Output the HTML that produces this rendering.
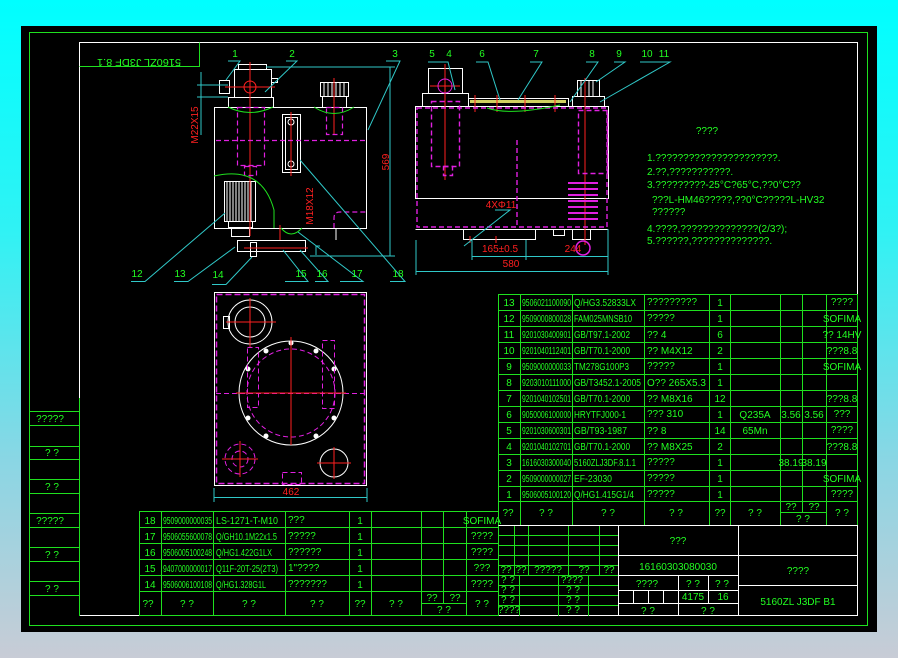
<!DOCTYPE html>
<html><head><meta charset="utf-8"><style>
html,body{margin:0;padding:0;width:898px;height:658px;overflow:hidden}
svg{display:block}
text{font-family:"Liberation Sans Narrow","Liberation Sans","Noto Sans CJK SC",sans-serif;fill:#22ff22;font-size:10px}
.r{fill:#ff2020}
</style></head><body>
<svg width="898" height="658" viewBox="0 0 898 658" xmlns="http://www.w3.org/2000/svg">
<defs><linearGradient id="bg" x1="0" y1="0" x2="0" y2="1">
<stop offset="0" stop-color="#00ffff"/><stop offset="0.35" stop-color="#30f2f4"/><stop offset="0.7" stop-color="#8ad6e4"/><stop offset="1" stop-color="#c8ccd6"/></linearGradient></defs>
<rect width="898" height="658" fill="url(#bg)"/>
<rect x="21" y="26" width="856" height="606" fill="#000"/>
<g fill="none" stroke="#1fe01f" stroke-width="1">
<rect x="29.5" y="32.5" width="838" height="593"/>
</g>
<rect x="79.5" y="42.5" width="778" height="573" fill="none" stroke="#fff"/>
<!-- upside-down title -->
<g fill="none" stroke="#1fe01f"><path d="M79.5 66.5H199.5V42.5"/></g>
<text x="139" y="49" transform="rotate(180 139 54)" text-anchor="middle" font-size="14" textLength="84" lengthAdjust="spacingAndGlyphs">5160ZL J3DF 8.1</text>

<!-- left column -->
<g stroke="#1fe01f" fill="none">
<path d="M79.5 398V616M29.5 411.5H79.5M29.5 425.5H79.5M29.5 446.5H79.5M29.5 459.5H79.5M29.5 479.5H79.5M29.5 493.5H79.5M29.5 513.5H79.5M29.5 527.5H79.5M29.5 547.5H79.5M29.5 561.5H79.5M29.5 581.5H79.5M29.5 595.5H79.5"/>
</g>
<g text-anchor="middle">
<text x="50" y="422">?????</text><text x="52" y="456">?  ?</text><text x="52" y="490">?  ?</text>
<text x="50" y="524">?????</text><text x="52" y="558">?  ?</text><text x="52" y="592">?  ?</text>
</g>

<!-- FRONT VIEW -->
<g fill="none" stroke="#fff">
<rect x="214.5" y="107.5" width="152" height="121"/>
<rect x="234.5" y="69.5" width="37" height="28"/>
<rect x="238.5" y="64.5" width="28" height="5"/>
<rect x="228.5" y="97.5" width="45" height="10"/>
<rect x="219.5" y="80.5" width="10" height="13"/>
<rect x="271.5" y="78.5" width="6" height="4"/>
<rect x="320.5" y="82.5" width="28" height="14"/>
<path d="M324 83V96M328 83V96M332 83V96M336 83V96M340 83V96M344 83V96"/>
<rect x="322.5" y="96.5" width="24" height="11"/>
<rect x="282.5" y="114.5" width="18" height="58"/>
<rect x="285.5" y="117.5" width="12" height="52"/>
<circle cx="291" cy="122" r="3"/><circle cx="291" cy="164" r="3"/>
<rect x="224.5" y="181.5" width="31" height="40"/>
<path d="M227 182V221M230 182V221M233 182V221M236 182V221M239 182V221M242 182V221M245 182V221M248 182V221M251 182V221"/>
<rect x="228.5" y="221.5" width="24" height="6"/>
<rect x="231.5" y="228.5" width="18" height="8"/>
<rect x="237.5" y="240.5" width="68" height="11"/>
<rect x="250.5" y="242.5" width="6" height="14"/>
<path d="M336 228V240"/>
</g>
<g fill="none" stroke="#ff2020">
<path d="M250 62V236M225 87H275M334 78V135M291 112V176M244 248H308M280 225V240"/>
<circle cx="250" cy="87" r="6"/>
</g>
<g fill="none" stroke="#e020e0" stroke-dasharray="5,3" stroke-width="1.2">
<path d="M216 140.5H366"/>
<rect x="237.5" y="107.5" width="27" height="58"/>
<rect x="244.5" y="166.5" width="12" height="9"/>
<rect x="326.5" y="107.5" width="16" height="27"/>
<path d="M334 228V218Q334 212 340 212H366"/>
</g>
<g fill="none" stroke="#1fe01f">
<path d="M228 107Q250 118 273 107M314 107Q334 120 354 107M214 176Q262 165 274 210V228M281 228Q291 240 302 228"/>
</g>
<g fill="none" stroke="#30c8c8">
<path d="M201 72V135M197 85H228M197 97H228M390 67V256M266 67H395M310 256H395M316 246H320M316 246V255"/>
<path d="M228 61H240L226 80M286 61H297L265 92M386 61H400L368 130"/>
<path d="M131 281.5H145L225 213M174 281.5H188L235 247M212 284.5H226L252 257M285 281.5H308L283 250M315 281.5H328L300 250M340 281.5H363L298 232M390 281.5H405L300 160"/>
</g>
<text class="r" x="198" y="125" transform="rotate(-90 198 125)" font-size="8" text-anchor="middle">M22X15</text>
<text class="r" x="389" y="162" transform="rotate(-90 389 162)" font-size="8" text-anchor="middle">569</text>
<text class="r" x="313" y="206" transform="rotate(-90 313 206)" font-size="8" text-anchor="middle">M18X12</text>
<g text-anchor="middle">
<text x="235" y="57">1</text><text x="292" y="57">2</text><text x="395" y="57">3</text>
<text x="137" y="277">12</text><text x="180" y="277">13</text><text x="218" y="278">14</text>
<text x="301" y="277">15</text><text x="322" y="277">16</text><text x="357" y="277">17</text><text x="398" y="277">18</text>
<text x="432" y="57">5</text><text x="449" y="57">4</text><text x="482" y="57">6</text><text x="536" y="57">7</text>
<text x="592" y="57">8</text><text x="619" y="57">9</text><text x="647" y="57">10</text><text x="664" y="57">11</text>
</g>

<!-- SIDE VIEW -->
<g fill="none" stroke="#fff">
<rect x="415.5" y="106.5" width="193" height="92"/>
<path d="M415.5 229.5H608.5"/>
<rect x="428.5" y="68.5" width="34" height="25"/>
<rect x="422.5" y="93.5" width="46" height="13"/>
<rect x="468.5" y="98.5" width="100" height="8"/>
<rect x="577.5" y="80.5" width="22" height="16"/>
<path d="M581 81V96M585 81V96M589 81V96M593 81V96"/>
<rect x="572.5" y="96.5" width="32" height="10"/>
<rect x="463.5" y="229.5" width="72" height="10"/>
<rect x="553.5" y="229.5" width="11" height="6"/>
<rect x="572.5" y="229.5" width="18" height="10"/>
</g>
<rect x="470" y="100" width="96" height="3" fill="#d0d060"/>
<g fill="none" stroke="#ff2020">
<path d="M445 64V180M430 86H460M585 78V245M475 95V112M497 95V112M525 95V112M555 95V112M470 236V243M496 236V243"/>
<circle cx="445" cy="86" r="7" stroke="#e020e0"/>
</g>
<g fill="none" stroke="#e020e0" stroke-dasharray="5,3" stroke-width="1.4">
<rect x="417" y="108" width="190" height="119"/>
<rect x="431.5" y="101.5" width="28" height="65"/>
<rect x="443.5" y="166.5" width="9" height="9"/>
<path d="M517 140V228"/>
<rect x="578.5" y="110.5" width="29" height="63"/>
</g>
<g stroke="#e020e0" stroke-width="2">
<path d="M568 183H598M568 189H598M568 195H598M568 201H598M568 207H598M568 213H598M568 219H598"/>
</g>
<circle cx="583" cy="248" r="7" fill="none" stroke="#e020e0" stroke-width="1.5"/>
<path d="M487 78Q510 86 560 75" fill="none" stroke="#1fe01f" transform="translate(0,30)"/>
<g fill="none" stroke="#30c8c8">
<path d="M472 256.5H608M416 271.5H608M416 240V275M608 229V275M472 240V260M526 240V260M495 210H510L464 246"/>
<path d="M428 62H448L455 90M476 62H488L500 100M530 62H542L518 100M586 62H598L570 102M614 62H625L596 82M640 62H670L600 102"/>
</g>
<text class="r" x="500" y="252" font-size="8" text-anchor="middle">165±0.5</text>
<text class="r" x="573" y="252" font-size="8" text-anchor="middle">244</text>
<text class="r" x="511" y="267" font-size="8" text-anchor="middle">580</text>
<text class="r" x="501" y="208" font-size="8" text-anchor="middle">4XΦ11</text>

<!-- NOTES -->
<text x="707" y="134" text-anchor="middle" font-size="11">????</text>
<g font-size="9.5">
<text x="647" y="161">1.??????????????????????.</text>
<text x="647" y="175">2.??,???????????.</text>
<text x="647" y="188">3.?????????-25°C?65°C,??0°C??</text>
<text x="652" y="203">???L-HM46?????,??0°C?????L-HV32</text>
<text x="652" y="215">??????</text>
<text x="647" y="232">4.????,??????????????(2/3?);</text>
<text x="647" y="244">5.??????,??????????????.</text>
</g>

<!-- PLAN VIEW -->
<rect x="214.5" y="292.5" width="152" height="193" fill="none" stroke="#fff"/>
<rect x="216.5" y="294.5" width="148" height="189" fill="none" stroke="#e020e0" stroke-dasharray="6,3" stroke-width="1.5"/>
<g fill="none" stroke="#fff">
<circle cx="291" cy="393" r="52"/>
<circle cx="250" cy="322" r="22"/>
<circle cx="250" cy="322" r="15"/>
<rect x="223.5" y="316.5" width="6" height="12"/>
<circle cx="334" cy="463" r="14"/>
</g>
<g fill="#fff"><circle cx="291" cy="343" r="2.5"/><circle cx="316" cy="351" r="2.5"/><circle cx="334" cy="369" r="2.5"/><circle cx="334" cy="418" r="2.5"/><circle cx="316" cy="436" r="2.5"/><circle cx="266" cy="436" r="2.5"/><circle cx="248" cy="418" r="2.5"/><circle cx="248" cy="369" r="2.5"/><circle cx="266" cy="351" r="2.5"/></g>
<g fill="none" stroke="#e020e0" stroke-dasharray="5,3">
<circle cx="291" cy="393" r="44"/>
<rect x="247.5" y="347.5" width="11" height="60"/>
<rect x="322.5" y="340.5" width="12" height="68"/>
<circle cx="240" cy="459" r="15"/>
<circle cx="240" cy="459" r="8"/>
<path d="M216 393.5H366"/>
<rect x="282.5" y="472.5" width="19" height="12"/>
</g>
<g fill="none" stroke="#ff2020">
<path d="M291 337V445M236 393H346M250 298V347M226 322H276M240 441V477M222 459H258M334 447V479M317 463H351"/>
</g>
<path d="M214 497.5H367M214 488V502M367 488V502" fill="none" stroke="#30c8c8"/>
<text class="r" x="291" y="495" font-size="8" text-anchor="middle">462</text>

<!-- LEFT PARTS TABLE -->
<g fill="none" stroke="#1fe01f">
<rect x="139.5" y="511.5" width="359" height="104"/>
<path d="M139.5 527.5H498.5M139.5 543.5H498.5M139.5 559.5H498.5M139.5 575.5H498.5M139.5 591.5H498.5M161.5 511V616M213.5 511V616M285.5 511V616M349.5 511V616M371.5 511V616M421.5 511V616M443.5 511V603M466.5 511V616M421.5 603.5H466.5"/>
</g>
<g>
<text x="150" y="524" text-anchor="middle">18</text><text x="163" y="524" textLength="49" lengthAdjust="spacingAndGlyphs">9509000000035</text><text x="216" y="524" textLength="62" lengthAdjust="spacingAndGlyphs">LS-1271-T-M10</text><text x="288" y="523">???</text><text x="360" y="524" text-anchor="middle">1</text><text x="482" y="524" text-anchor="middle">SOFIMA</text>
<text x="150" y="540" text-anchor="middle">17</text><text x="163" y="540" textLength="49" lengthAdjust="spacingAndGlyphs">9506055600078</text><text x="216" y="540" textLength="61" lengthAdjust="spacingAndGlyphs">Q/GH10.1M22x1.5</text><text x="288" y="539">?????</text><text x="360" y="540" text-anchor="middle">1</text><text x="482" y="539" text-anchor="middle">????</text>
<text x="150" y="556" text-anchor="middle">16</text><text x="163" y="556" textLength="49" lengthAdjust="spacingAndGlyphs">9506005100248</text><text x="216" y="556" textLength="56" lengthAdjust="spacingAndGlyphs">Q/HG1.422G1LX</text><text x="288" y="555">??????</text><text x="360" y="556" text-anchor="middle">1</text><text x="482" y="555" text-anchor="middle">????</text>
<text x="150" y="572" text-anchor="middle">15</text><text x="163" y="572" textLength="49" lengthAdjust="spacingAndGlyphs">9407000000017</text><text x="216" y="572" textLength="62" lengthAdjust="spacingAndGlyphs">Q11F-20T-25(2T3)</text><text x="288" y="571">1"????</text><text x="360" y="572" text-anchor="middle">1</text><text x="482" y="571" text-anchor="middle">???</text>
<text x="150" y="588" text-anchor="middle">14</text><text x="163" y="588" textLength="49" lengthAdjust="spacingAndGlyphs">9506006100108</text><text x="216" y="588" textLength="50" lengthAdjust="spacingAndGlyphs">Q/HG1.328G1L</text><text x="288" y="587">???????</text><text x="360" y="588" text-anchor="middle">1</text><text x="482" y="587" text-anchor="middle">????</text>
<text x="148" y="607" text-anchor="middle">??</text><text x="187" y="607" text-anchor="middle">?   ?</text><text x="249" y="607" text-anchor="middle">?   ?</text><text x="317" y="607" text-anchor="middle">?   ?</text><text x="360" y="607" text-anchor="middle">??</text><text x="396" y="607" text-anchor="middle">?    ?</text><text x="432" y="601" text-anchor="middle">??</text><text x="455" y="601" text-anchor="middle">??</text><text x="444" y="613" text-anchor="middle">?  ?</text><text x="482" y="607" text-anchor="middle">?  ?</text>
</g>

<!-- RIGHT PARTS TABLE -->
<g fill="none" stroke="#1fe01f">
<rect x="498.5" y="294.5" width="359" height="231"/>
<path d="M498.5 310.5H858M498.5 326.5H858M498.5 342.5H858M498.5 358.5H858M498.5 374.5H858M498.5 390.5H858M498.5 406.5H858M498.5 422.5H858M498.5 438.5H858M498.5 454.5H858M498.5 470.5H858M498.5 486.5H858M498.5 501.5H858M520.5 294V525M572.5 294V525M644.5 294V525M709.5 294V525M730.5 294V525M780.5 294V525M802.5 294V513M826.5 294V525M780.5 512.5H826.5"/>
</g>
<g>
<text x="509" y="306" text-anchor="middle">13</text><text x="522" y="306" textLength="49" lengthAdjust="spacingAndGlyphs">9506021100090</text><text x="574" y="306" textLength="62" lengthAdjust="spacingAndGlyphs">Q/HG3.52833LX</text><text x="647" y="305">?????????</text><text x="720" y="306" text-anchor="middle">1</text><text x="842" y="305" text-anchor="middle">????</text>
<text x="509" y="322" text-anchor="middle">12</text><text x="522" y="322" textLength="49" lengthAdjust="spacingAndGlyphs">9509000800028</text><text x="574" y="322" textLength="58" lengthAdjust="spacingAndGlyphs">FAM025MNSB10</text><text x="647" y="321">?????</text><text x="720" y="322" text-anchor="middle">1</text><text x="842" y="322" text-anchor="middle">SOFIMA</text>
<text x="509" y="338" text-anchor="middle">11</text><text x="522" y="338" textLength="49" lengthAdjust="spacingAndGlyphs">9201030400901</text><text x="574" y="338" textLength="56" lengthAdjust="spacingAndGlyphs">GB/T97.1-2002</text><text x="647" y="338">?? 4</text><text x="720" y="338" text-anchor="middle">6</text><text x="842" y="338" text-anchor="middle">?? 14HV</text>
<text x="509" y="354" text-anchor="middle">10</text><text x="522" y="354" textLength="49" lengthAdjust="spacingAndGlyphs">9201040112401</text><text x="574" y="354" textLength="56" lengthAdjust="spacingAndGlyphs">GB/T70.1-2000</text><text x="647" y="354">?? M4X12</text><text x="720" y="354" text-anchor="middle">2</text><text x="842" y="354" text-anchor="middle">???8.8</text>
<text x="509" y="370" text-anchor="middle">9</text><text x="522" y="370" textLength="49" lengthAdjust="spacingAndGlyphs">9509000000033</text><text x="574" y="370" textLength="55" lengthAdjust="spacingAndGlyphs">TM278G100P3</text><text x="647" y="369">?????</text><text x="720" y="370" text-anchor="middle">1</text><text x="842" y="370" text-anchor="middle">SOFIMA</text>
<text x="509" y="386" text-anchor="middle">8</text><text x="522" y="386" textLength="49" lengthAdjust="spacingAndGlyphs">9203010111000</text><text x="574" y="386" textLength="67" lengthAdjust="spacingAndGlyphs">GB/T3452.1-2005</text><text x="647" y="386">O?? 265X5.3</text><text x="720" y="386" text-anchor="middle">1</text>
<text x="509" y="402" text-anchor="middle">7</text><text x="522" y="402" textLength="49" lengthAdjust="spacingAndGlyphs">9201040102501</text><text x="574" y="402" textLength="56" lengthAdjust="spacingAndGlyphs">GB/T70.1-2000</text><text x="647" y="402">?? M8X16</text><text x="720" y="402" text-anchor="middle">12</text><text x="842" y="402" text-anchor="middle">???8.8</text>
<text x="509" y="418" text-anchor="middle">6</text><text x="522" y="418" textLength="49" lengthAdjust="spacingAndGlyphs">9050006100000</text><text x="574" y="418" textLength="52" lengthAdjust="spacingAndGlyphs">HRYTFJ000-1</text><text x="647" y="417">??? 310</text><text x="720" y="418" text-anchor="middle">1</text><text x="755" y="418" text-anchor="middle">Q235A</text><text x="791" y="418" text-anchor="middle">3.56</text><text x="814" y="418" text-anchor="middle">3.56</text><text x="842" y="417" text-anchor="middle">???</text>
<text x="509" y="434" text-anchor="middle">5</text><text x="522" y="434" textLength="49" lengthAdjust="spacingAndGlyphs">9201030600301</text><text x="574" y="434" textLength="53" lengthAdjust="spacingAndGlyphs">GB/T93-1987</text><text x="647" y="434">?? 8</text><text x="720" y="434" text-anchor="middle">14</text><text x="755" y="434" text-anchor="middle">65Mn</text><text x="842" y="433" text-anchor="middle">????</text>
<text x="509" y="450" text-anchor="middle">4</text><text x="522" y="450" textLength="49" lengthAdjust="spacingAndGlyphs">9201040102701</text><text x="574" y="450" textLength="56" lengthAdjust="spacingAndGlyphs">GB/T70.1-2000</text><text x="647" y="450">?? M8X25</text><text x="720" y="450" text-anchor="middle">2</text><text x="842" y="450" text-anchor="middle">???8.8</text>
<text x="509" y="466" text-anchor="middle">3</text><text x="522" y="466" textLength="49" lengthAdjust="spacingAndGlyphs">1616030300040</text><text x="574" y="466" textLength="62" lengthAdjust="spacingAndGlyphs">5160ZLJ3DF.8.1.1</text><text x="647" y="465">?????</text><text x="720" y="466" text-anchor="middle">1</text><text x="791" y="466" text-anchor="middle">38.19</text><text x="814" y="466" text-anchor="middle">38.19</text>
<text x="509" y="482" text-anchor="middle">2</text><text x="522" y="482" textLength="49" lengthAdjust="spacingAndGlyphs">9509000000027</text><text x="574" y="482" textLength="38" lengthAdjust="spacingAndGlyphs">EF-23030</text><text x="647" y="481">?????</text><text x="720" y="482" text-anchor="middle">1</text><text x="842" y="482" text-anchor="middle">SOFIMA</text>
<text x="509" y="498" text-anchor="middle">1</text><text x="522" y="498" textLength="49" lengthAdjust="spacingAndGlyphs">9506005100120</text><text x="574" y="498" textLength="60" lengthAdjust="spacingAndGlyphs">Q/HG1.415G1/4</text><text x="647" y="497">?????</text><text x="720" y="498" text-anchor="middle">1</text><text x="842" y="497" text-anchor="middle">????</text>
<text x="508" y="516" text-anchor="middle">??</text><text x="546" y="516" text-anchor="middle">?   ?</text><text x="608" y="516" text-anchor="middle">?   ?</text><text x="676" y="516" text-anchor="middle">?   ?</text><text x="720" y="516" text-anchor="middle">??</text><text x="755" y="516" text-anchor="middle">?    ?</text><text x="791" y="510" text-anchor="middle">??</text><text x="814" y="510" text-anchor="middle">??</text><text x="803" y="522" text-anchor="middle">?  ?</text><text x="842" y="516" text-anchor="middle">?  ?</text>
</g>

<!-- TITLE BLOCK -->
<g fill="none" stroke="#1fe01f">
<path d="M498.5 535.5H618.5M498.5 545.5H618.5M498.5 555.5H618.5M498.5 565.5H618.5M498.5 575.5H618.5M498.5 585.5H618.5M498.5 595.5H618.5M498.5 605.5H618.5M514.5 525V575M528.5 525V575M568.5 525V575M599.5 525V575M519.5 575V616M558.5 575V616M588.5 575V616"/>
</g>
<g fill="none" stroke="#fff">
<path d="M498.5 525.5H858M618.5 525V616M738.5 525V616M618.5 555.5H858M618.5 575.5H738.5M618.5 590.5H738.5M618.5 603.5H738.5M678.5 575V616M708.5 575V603M633.5 590V603M648.5 590V603M663.5 590V603M738.5 585.5H858"/>
</g>
<g text-anchor="middle" font-size="8">
<text x="506" y="573">??</text><text x="521" y="573">??</text><text x="548" y="573">?????</text><text x="584" y="573">??</text><text x="609" y="573">??</text>
<text x="508" y="583">? ?</text><text x="508" y="593">? ?</text><text x="508" y="603">? ?</text><text x="509" y="613">????</text>
<text x="572" y="583">????</text><text x="573" y="593">? ?</text><text x="573" y="603">? ?</text><text x="573" y="613">? ?</text>
<text x="647" y="587">????</text><text x="693" y="587">? ?</text><text x="722" y="587">? ?</text>
<text x="648" y="614">?  ?</text><text x="708" y="614">?  ?</text>
</g>
<g text-anchor="middle">
<text x="678" y="544" font-size="13">???</text>
<text x="678" y="570" font-size="11">16160303080030</text>
<text x="693" y="600">4175</text><text x="723" y="600">16</text>
<text x="798" y="574" font-size="12">????</text>
<text x="798" y="605" font-size="11">5160ZL J3DF B1</text>
</g>
</svg>
</body></html>
